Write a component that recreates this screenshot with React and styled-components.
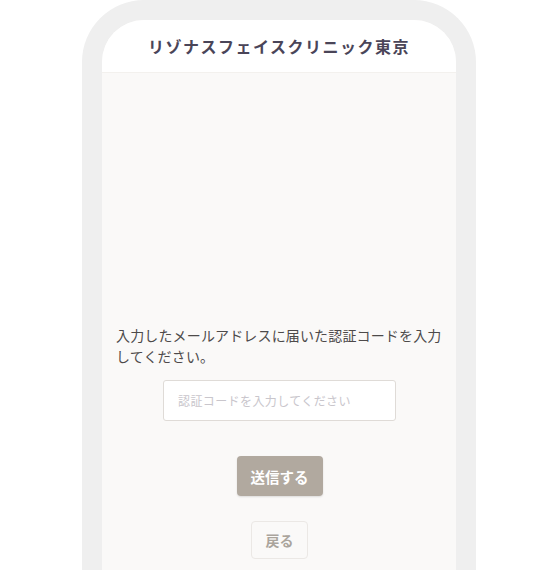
import React from "react";
import styled, { createGlobalStyle } from "styled-components";

const Global = createGlobalStyle`
  html, body { margin: 0; padding: 0; background: #ffffff; }
  body { font-family: "Noto Sans CJK JP", "Noto Sans", sans-serif; overflow: hidden; }
`;

const Page = styled.div`
  width: 560px;
  height: 570px;
  display: flex;
  justify-content: center;
  overflow: hidden;
`;

const Phone = styled.div`
  width: 354px;
  margin-left: -2px;
  height: 620px;
  border: 20px solid #efefef;
  border-bottom: none;
  border-radius: 62px 62px 0 0;
  overflow: hidden;
  display: flex;
  flex-direction: column;
  background: #faf9f8;
`;

const Header = styled.header`
  height: 52px;
  flex: none;
  background: #ffffff;
  border-bottom: 1px solid #f3f1ee;
  display: flex;
  align-items: center;
  justify-content: center;
`;

const Title = styled.h1`
  margin: 0;
  font-size: 16px;
  font-weight: 700;
  letter-spacing: 1.5px;
  color: #4a4558;
`;

const Content = styled.main`
  padding: 252px 13px 0 14px;
  display: flex;
  flex-direction: column;
  align-items: center;
`;

const Message = styled.p`
  margin: 0;
  align-self: stretch;
  font-size: 14px;
  line-height: 21px;
  letter-spacing: 0.15px;
  color: #4d4a4a;
`;

const CodeInput = styled.input`
  box-sizing: border-box;
  margin-top: 13px;
  width: 233px;
  height: 41px;
  padding: 0 14px;
  border: 1px solid #dfdbd7;
  border-radius: 3px;
  background: #ffffff;
  font-family: inherit;
  font-size: 12px;
  letter-spacing: 0.4px;
  outline: none;
  &::placeholder { color: #c9c6cc; }
`;

const Button = styled.button`
  box-sizing: border-box;
  font-family: inherit;
  font-weight: 700;
  cursor: pointer;
  border-radius: 4px;
  display: flex;
  align-items: center;
  justify-content: center;
  padding: 0;
  width: ${(p) => (p.$primary ? "86px" : "57px")};
  height: ${(p) => (p.$primary ? "40px" : "38px")};
  margin-top: ${(p) => (p.$primary ? "35px" : "25px")};
  font-size: ${(p) => (p.$primary ? "14.5px" : "14px")};
  color: ${(p) => (p.$primary ? "#ffffff" : "#aaa49c")};
  background: ${(p) => (p.$primary ? "#b1a99f" : "#faf9f8")};
  border: ${(p) => (p.$primary ? "none" : "1px solid #ebe8e5")};
  box-shadow: ${(p) => (p.$primary ? "0 1px 2px rgba(0,0,0,0.12)" : "none")};
`;

export default function App() {
  return (
    <>
      <Global />
      <Page>
        <Phone>
          <Header>
            <Title>リゾナスフェイスクリニック東京</Title>
          </Header>
          <Content>
            <Message>
              入力したメールアドレスに届いた認証コードを入力してください。
            </Message>
            <CodeInput placeholder="認証コードを入力してください" />
            <Button $primary>送信する</Button>
            <Button>戻る</Button>
          </Content>
        </Phone>
      </Page>
    </>
  );
}
